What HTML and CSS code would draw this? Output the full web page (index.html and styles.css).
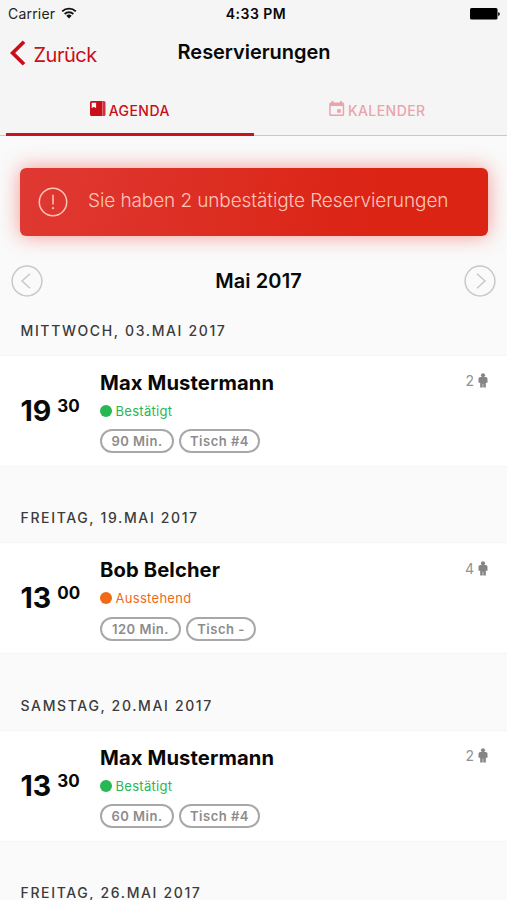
FILE: index.html
```html
<!DOCTYPE html>
<html lang="de">
<head>
<meta charset="utf-8">
<title>Reservierungen</title>
<link rel="stylesheet" href="styles.css">
</head>
<body>
<svg class="defs" width="0" height="0" aria-hidden="true">
  <symbol id="person" viewBox="0 0 10 16">
    <circle cx="5" cy="2.400" r="2.200"/>
    <path d="M2.200 4.200h5.600q2 0 2 1.900v4.400H8V15.500H5.300V11.500h-.6v4H2v-5H.2V6.100q0-1.900 2-1.900z"/>
  </symbol>
</svg>
<header class="header">
  <div class="status">
    <div class="carrier"><span>Carrier</span>
      <svg width="16" height="12" viewBox="0 0 16 12"><g fill="none" stroke="#111" stroke-width="1.9"><path d="M1.200 4.400a9.800 9.800 0 0 1 13.600 0"/><path d="M3.700 7a6.200 6.200 0 0 1 8.600 0"/></g><path d="M8 11.500 5.300 8.800a3.900 3.900 0 0 1 5.400 0z" fill="#111"/></svg>
    </div>
    <div class="clock">4:33 PM</div>
    <div class="battery"><svg width="30" height="12" viewBox="0 0 30 12"><rect width="27.500" height="11.600" rx="1.500"/><path d="M28.200 4v4q1.600-.6 1.600-2t-1.600-2z"/></svg></div>
  </div>
  <nav class="nav">
    <a class="back"><svg width="16" height="26" viewBox="0 0 16 26"><path d="M14 1.700 2.600 13 14 24.300" fill="none" stroke="#c90d19" stroke-width="3.700"/></svg><span>Zurück</span></a>
    <h1 class="title">Reservierungen</h1>
    <span></span>
  </nav>
  <div class="tabs">
    <a class="tab active"><svg width="16" height="16" viewBox="0 0 16 16"><path fill-rule="evenodd" d="M1.500 0H12v15H1.500Q0 15 0 13.500v-12Q0 0 1.500 0zM1.700 1.700v5.200l2.200-.8 2.200.8V1.700z"/><path d="M12.300 0h1.500q1.700 0 1.700 1.500v12q0 1.500-1.700 1.500h-1.500z" opacity=".85"/></svg><span>AGENDA</span></a>
    <a class="tab"><svg width="16" height="16" viewBox="0 0 16 16"><path fill-rule="evenodd" d="M2.500 0h2v1.500h6.500V0h2v1.500h.7q1.500 0 1.500 1.500v10.500q0 1.500-1.500 1.500h-12Q.2 15 .2 13.500V3q0-1.500 1.500-1.500h.8zM1.700 5v8.500h12V5z"/><path d="M8.200 8.200h3.600v3.600H8.200z"/></svg><span>KALENDER</span></a>
  </div>
</header>
<main>
  <div class="alert">
    <svg width="30" height="30" viewBox="0 0 30 30"><circle cx="15" cy="15" r="13.700" fill="none" stroke="#ffc4b9" stroke-width="1.500"/><path d="M15 7.800v9.700" stroke="#ffc4b9" stroke-width="1.500"/><circle cx="15" cy="21.200" r="1.100" fill="#ffc4b9"/></svg>
    <span>Sie haben 2 unbestätigte Reservierungen</span>
  </div>
  <div class="month">
    <svg class="arrow" width="32" height="32" viewBox="0 0 32 32"><circle cx="16" cy="16" r="14.900"/><path d="M19 8.700 11 16l8 7.300"/></svg>
    <h2>Mai 2017</h2>
    <svg class="arrow" width="32" height="32" viewBox="0 0 32 32"><circle cx="16" cy="16" r="14.900"/><path d="m13 8.700 8 7.300-8 7.300"/></svg>
  </div>
  <section class="day first">
    <h3>MITTWOCH, 03.MAI 2017</h3>
    <article class="row">
      <div class="time">19<sup>30</sup></div>
      <div class="info">
        <div class="name">Max Mustermann</div>
        <div class="state ok"><i></i>Bestätigt</div>
        <div class="tags"><span class="w90">90 Min.</span><span class="t4">Tisch #4</span></div>
      </div>
      <div class="guests">2<svg width="10" height="15"><use href="#person"/></svg></div>
    </article>
  </section>
  <section class="day">
    <h3>FREITAG, 19.MAI 2017</h3>
    <article class="row">
      <div class="time">13<sup>00</sup></div>
      <div class="info">
        <div class="name">Bob Belcher</div>
        <div class="state open"><i></i>Ausstehend</div>
        <div class="tags"><span class="w120">120 Min.</span><span class="t0">Tisch -</span></div>
      </div>
      <div class="guests">4<svg width="10" height="15"><use href="#person"/></svg></div>
    </article>
  </section>
  <section class="day">
    <h3>SAMSTAG, 20.MAI 2017</h3>
    <article class="row">
      <div class="time">13<sup>30</sup></div>
      <div class="info">
        <div class="name">Max Mustermann</div>
        <div class="state ok"><i></i>Bestätigt</div>
        <div class="tags"><span class="w90">60 Min.</span><span class="t4">Tisch #4</span></div>
      </div>
      <div class="guests">2<svg width="10" height="15"><use href="#person"/></svg></div>
    </article>
  </section>
  <section class="day">
    <h3>FREITAG, 26.MAI 2017</h3>
  </section>
</main>
</body>
</html>
```
FILE: styles.css
```css
* { box-sizing: border-box; }
html, body { height: 900px; overflow: hidden; }
body { margin: 0; background: #fafafa; color: #080808; font-family: Inter, "Liberation Sans", sans-serif; }
h1, h2, h3 { margin: 0; }
svg { display: block; flex: none; }
.defs { position: absolute; }
.header { height: 136px; background: #f5f5f5; border-bottom: 1px solid #c9c9c9; }
.status { display: grid; grid-template-columns: 1fr auto 1fr; align-items: center; height: 28px; padding: 0 7px 0 8px; font-size: 14px; line-height: 28px; }
.carrier { display: flex; align-items: center; gap: 6px; color: #222; letter-spacing: .2px; }
.carrier svg { margin-top: -3px; }
.clock { font-weight: 600; letter-spacing: .5px; padding-left: 4px; }
.battery { display: flex; justify-content: flex-end; }
.nav { display: grid; grid-template-columns: 1fr auto 1fr; align-items: center; height: 50px; padding: 0 10px; }
.back { display: flex; align-items: center; gap: 7.500px; color: #c90d19; font-size: 20px; letter-spacing: -.5px; }
.back span { padding-top: 3px; }
.title { font-size: 20px; line-height: 48px; font-weight: 600; padding: 0 0 2px 1px; letter-spacing: -.05px; }
.tabs { display: flex; height: 58px; padding: 0 6px; }
.tab { display: flex; flex: 1; align-items: center; justify-content: center; gap: 3px; padding-top: 9px; color: #e9a4ad; fill: #e9a4ad; font-size: 14px; font-weight: 500; letter-spacing: .45px; border-bottom: 3px solid transparent; }
.tab svg { margin-top: -3px; }
.tab.active { color: #c90d19; fill: #c90d19; border-color: #c9141e; }
.alert { display: flex; align-items: center; gap: 20px; height: 68px; margin: 32px 19.500px 0 20px; padding: 0 18px; border-radius: 6px; background: linear-gradient(100deg, #df3933, #db2414 75%); color: #ffc4b9; font-size: 19px; font-weight: 300; letter-spacing: -.1px; white-space: nowrap; box-shadow: 0 0 20px rgba(237, 54, 42, .5); }
.alert span { padding-bottom: 3px; }
.month { display: flex; align-items: center; justify-content: space-between; height: 32px; margin-top: 29px; padding: 0 11px; }
.month h2 { font-size: 20px; font-weight: 600; padding: 0 0 1px 10px; letter-spacing: .1px; }
.arrow { fill: none; stroke: #c8c8c8; stroke-width: 1.500; }
.day h3 { height: 77.700px; padding: 42.600px 0 0 20.500px; color: #3c3c3c; font-size: 14px; line-height: 20px; font-weight: 500; letter-spacing: 1.640px; }
.day.first h3 { height: 58.500px; padding-top: 24px; }
.row { display: flex; height: 110px; padding-left: 20px; background: #fff; box-shadow: 0 0 1px #ddd; }
.time { display: flex; width: 80px; padding: 40px 0 0 .5px; font-size: 28.500px; font-weight: 700; line-height: 30px; }
.time sup { margin-left: 6px; font-size: 17px; line-height: 20px; vertical-align: baseline; }
.info { flex: 1; }
.name { padding-top: 14px; font-size: 20.200px; line-height: 26px; font-weight: 700; letter-spacing: .12px; }
.state { display: flex; align-items: center; gap: 3.500px; margin-top: 5px; font-size: 13px; line-height: 20px; letter-spacing: .3px; }
.state i { width: 12px; height: 12px; border-radius: 50%; background: currentColor; }
.ok { color: #27b753; }
.open { color: #f16a17; }
.tags { display: flex; gap: 5px; margin-top: 8.500px; }
.tags span { height: 24px; border: 2px solid #a8a8a8; border-radius: 12px; color: #8c8c8c; font-size: 13px; font-weight: 600; line-height: 20px; text-align: center; letter-spacing: .5px; }
.w90 { width: 74px; }
.w120 { width: 81px; }
.t4 { width: 81px; }
.t0 { width: 70px; }
.guests { display: flex; align-items: center; gap: 4px; height: 20px; margin: 15px 19px 0 0; color: #929292; fill: #858585; font-size: 14px; }
```
